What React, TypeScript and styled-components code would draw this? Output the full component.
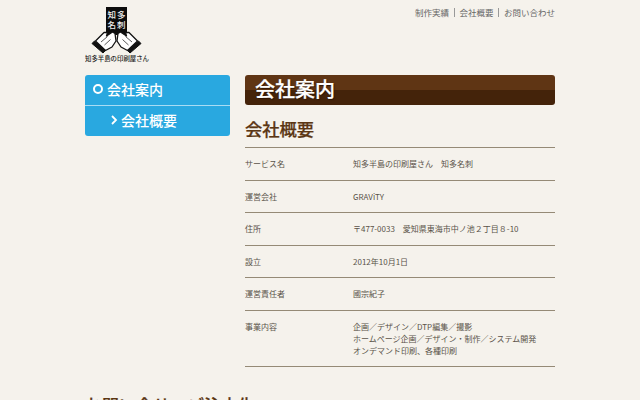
import React from "react";
import styled, { createGlobalStyle } from "styled-components";

const Global = createGlobalStyle`
  html, body { margin: 0; padding: 0; height: 400px; overflow: hidden; background: #f5f2ec; }
  body { font-family: "Noto Sans CJK JP", "Noto Sans", sans-serif; color: #5a5148; }
`;

const Page = styled.div`
  width: 470px;
  height: 400px;
  margin: 0 auto;
  overflow: hidden;
`;

const Header = styled.header`
  display: flex;
  justify-content: space-between;
  height: 75px;
`;

const Logo = styled.div`
  width: 64px;
  display: flex;
  flex-direction: column;
  align-items: center;
  padding-top: 5px;
  box-sizing: border-box;
`;

const LogoCaption = styled.div`
  font-size: 6.4px;
  line-height: 8px;
  color: #222;
  white-space: nowrap;
  font-weight: 500;
`;

const TopNav = styled.nav`
  display: flex;
  align-items: center;
  height: 12px;
  margin-top: 6px;
  font-size: 8.5px;
  line-height: 12px;
  color: #666;
`;

const NavSep = styled.span`
  width: 1px;
  height: 9px;
  background: #999;
  margin: 0 4.75px;
`;

const Body = styled.div`
  display: flex;
  gap: 15px;
  align-items: flex-start;
`;

const Side = styled.aside`
  width: 145px;
  border-radius: 3px;
  background: #29a8e0;
  color: #fff;
  overflow: hidden;
  flex: none;
`;

const SideItem = styled.div<{ $sub?: boolean }>`
  height: ${(p) => (p.$sub ? "31px" : "30px")};
  display: flex;
  align-items: center;
  gap: ${(p) => (p.$sub ? "3px" : "4px")};
  box-sizing: border-box;
  padding: 0 0 2px ${(p) => (p.$sub ? "26px" : "8px")};
  font-size: 14px;
  font-weight: 500;
  border-top: ${(p) => (p.$sub ? "1px solid #a8dcf4" : "none")};
`;

const Main = styled.main`
  flex: 1;
  min-width: 0;
`;

const Banner = styled.h1`
  margin: 0;
  height: 30px;
  border-radius: 3px;
  background: linear-gradient(#5f3514 0 50%, #44230a 50% 100%);
  color: #fff;
  font-size: 20px;
  font-weight: 500;
  -webkit-text-stroke: 0.25px #fff;
  line-height: 28px;
  padding-left: 10px;
  text-shadow: 1px 1px 1px #2c1505;
`;

const Title = styled.h2`
  margin: 0;
  padding-top: 12px;
  height: 43px;
  box-sizing: border-box;
  font-size: 17.3px;
  line-height: 24px;
  font-weight: 500;
  -webkit-text-stroke: 0.25px #5b3613;
  color: #5b3613;
  border-bottom: 1px solid #958a76;
`;

const Row = styled.div`
  display: flex;
  box-sizing: border-box;
  min-height: 32.5px;
  padding: 10px 0 9px;
  border-bottom: 1px solid #958a76;
  font-size: 8px;
  line-height: 12px;
  color: #5a5249;
`;

const Label = styled.div`
  width: 108px;
  flex: none;
`;

const Footing = styled.h2`
  margin: 26px 0 0 -160px;
  font-size: 17px;
  line-height: 24px;
  font-weight: 500;
  -webkit-text-stroke: 0.25px #5b3613;
  color: #5b3613;
  white-space: nowrap;
`;

const LogoType = styled.text`
  font-size: 8.5px;
  letter-spacing: 1px;
  font-weight: 500;
  fill: #eee;
  text-anchor: middle;
`;

const Hand = () => (
  <g>
    <path d="M7 38.5L9.5 36 20.5 45.5 18 48z" fill="#111" stroke="#111" strokeWidth="1" />
    <path
      d="M10.5 36L19 27.5 22.5 27.5 21.5 31 27.5 27 30 28.5 31 36 27 42 20.5 45.5z"
      fill="#fff"
      stroke="#111"
      strokeWidth="1.3"
      strokeLinejoin="round"
    />
    <path d="M16 37l6.5-5.5M19.5 40l6-5.5" fill="none" stroke="#111" strokeWidth="0.7" />
  </g>
);

const LogoMark = () => (
  <svg width="64" height="50" viewBox="0 0 64 50">
    <rect x="21" y="2" width="21" height="28" fill="#0c0c0c" />
    <LogoType x="32" y="13">知多</LogoType>
    <LogoType x="32" y="22.5">名刺</LogoType>
    <Hand />
    <g transform="translate(63 0) scale(-1 1)">
      <Hand />
    </g>
  </svg>
);

const Ring = styled.span`
  width: 6px;
  height: 6px;
  border: 2px solid #fff;
  border-radius: 50%;
`;

const Chevron = () => (
  <svg width="7" height="10" viewBox="0 0 7 10">
    <path d="M1 1l4 4-4 4" fill="none" stroke="#fff" strokeWidth="1.8" />
  </svg>
);

const rows: [string, React.ReactNode][] = [
  ["サービス名", "知多半島の印刷屋さん　知多名刺"],
  ["運営会社", "GRAViTY"],
  ["住所", "〒477-0033　愛知県東海市中ノ池２丁目８-10"],
  ["設立", "2012年10月1日"],
  ["運営責任者", "國宗紀子"],
  [
    "事業内容",
    <>
      企画／デザイン／DTP編集／撮影
      <br />
      ホームページ企画／デザイン・制作／システム開発
      <br />
      オンデマンド印刷、各種印刷
    </>,
  ],
];

export default function App() {
  return (
    <Page>
      <Global />
      <Header>
        <Logo>
          <LogoMark />
          <LogoCaption>知多半島の印刷屋さん</LogoCaption>
        </Logo>
        <TopNav>
          制作実績<NavSep />会社概要<NavSep />お問い合わせ
        </TopNav>
      </Header>
      <Body>
        <Side>
          <SideItem><Ring />会社案内</SideItem>
          <SideItem $sub><Chevron />会社概要</SideItem>
        </Side>
        <Main>
          <Banner>会社案内</Banner>
          <Title>会社概要</Title>
          {rows.map(([k, v]) => (
            <Row key={k}>
              <Label>{k}</Label>
              <div>{v}</div>
            </Row>
          ))}
          <Footing>お問い合せ・ご注文先</Footing>
        </Main>
      </Body>
    </Page>
  );
}
